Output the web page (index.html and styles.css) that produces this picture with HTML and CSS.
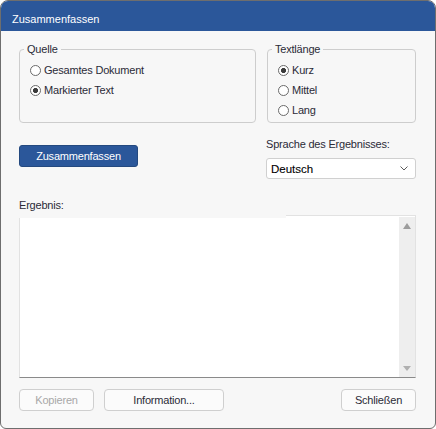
FILE: index.html
```html
<!DOCTYPE html>
<html lang="de">
<head>
<meta charset="utf-8">
<title>Zusammenfassen</title>
<link rel="stylesheet" href="styles.css">
</head>
<body>
<div class="window">
  <div class="titlebar">Zusammenfassen</div>
  <div class="content">
    <div class="groups">
      <fieldset class="group">
        <legend>Quelle</legend>
        <div class="options">
          <div class="option"><span class="radio"></span>Gesamtes Dokument</div>
          <div class="option"><span class="radio checked"></span>Markierter Text</div>
        </div>
      </fieldset>
      <fieldset class="group">
        <legend>Textlänge</legend>
        <div class="options">
          <div class="option"><span class="radio checked"></span>Kurz</div>
          <div class="option"><span class="radio"></span>Mittel</div>
          <div class="option"><span class="radio"></span>Lang</div>
        </div>
      </fieldset>
    </div>
    <div class="action">
      <div><button class="primary">Zusammenfassen</button></div>
      <div class="lang">
        <div class="label">Sprache des Ergebnisses:</div>
        <div class="select">
          <span class="select-value">Deutsch</span>
          <svg class="chevron" width="8" height="5" viewBox="0 0 8 5"><polyline points="0.5,0.5 4,4 7.5,0.5" fill="none" stroke="#5c5c5c" stroke-width="1"/></svg>
        </div>
      </div>
    </div>
    <div class="label result-label">Ergebnis:</div>
    <div class="result">
      <div class="result-text"></div>
      <div class="scrollbar"><span class="arrow up"></span><span class="arrow down"></span></div>
    </div>
    <div class="footer">
      <button class="btn disabled">Kopieren</button>
      <button class="btn wide">Information...</button>
      <button class="btn close">Schließen</button>
    </div>
  </div>
</div>
</body>
</html>
```

FILE: styles.css
```css
html, body {
  margin: 0;
  background: #ffffff;
}
body {
  font-family: "Liberation Sans", Arial, sans-serif;
  font-size: 11px;
  line-height: 14px;
  color: #2b2b38;
  letter-spacing: -0.2px;
}
.window {
  width: 436px;
  height: 429px;
  box-sizing: border-box;
  border: 1px solid #6e6e6e;
  border-radius: 8px 8px 6px 6px;
  background: #f7f7f7;
  overflow: hidden;
  display: flex;
  flex-direction: column;
}
.titlebar {
  flex: none;
  height: 30px;
  box-sizing: border-box;
  padding: 11px 0 0 11px;
  background: #2b579a;
  color: #ffffff;
  letter-spacing: 0;
}
.content {
  flex: 1;
  display: flex;
  flex-direction: column;
  padding: 11px 19px 17px 18px;
}
.groups {
  display: grid;
  grid-template-columns: 237px 149px;
  column-gap: 11px;
}
.group {
  margin: 0;
  padding: 0 0 2px;
  min-width: 0;
  border: 1px solid #cdcdcd;
  border-radius: 4px;
}
.group legend {
  margin-left: 4px;
  padding: 0 3px;
  line-height: 14px;
}
.options {
  padding-top: 4px;
}
.option {
  display: flex;
  align-items: center;
  height: 20px;
  padding-left: 10px;
}
.radio {
  flex: none;
  width: 11px;
  height: 11px;
  box-sizing: border-box;
  margin-right: 3px;
  border: 1px solid #6a6a6a;
  border-radius: 50%;
  background: #ffffff;
}
.radio.checked {
  background: radial-gradient(circle at center, #3a3a3a 0 2.2px, #ffffff 2.9px);
}
.action {
  display: grid;
  grid-template-columns: 237px 150px;
  column-gap: 10px;
  margin-top: 14px;
}
.primary {
  margin-top: 8px;
  width: 119px;
  height: 22px;
  padding: 0;
  border: 1px solid #24497f;
  border-radius: 3px;
  background: #2b579a;
  color: #ffffff;
  font: inherit;
  letter-spacing: inherit;
}
.select {
  margin-top: 7px;
  height: 21px;
  box-sizing: border-box;
  display: flex;
  align-items: center;
  justify-content: space-between;
  padding: 0 7px 0 4px;
  border: 1px solid #d0d0d0;
  border-radius: 3px;
  background: #ffffff;
}
.select-value {
  font-size: 11.5px;
  color: #000000;
  letter-spacing: 0;
  -webkit-text-stroke: 0.1px #000000;
}
.chevron {
  display: block;
}
.result-label {
  margin-top: 19px;
}
.result {
  position: relative;
  margin-top: 3px;
  height: 163px;
  box-sizing: border-box;
  display: flex;
  border: 1px solid #e2e2e2;
  border-bottom-color: #8a8a8a;
  background: #ffffff;
}
.result::before {
  content: "";
  position: absolute;
  left: -1px;
  top: -1px;
  width: 267px;
  height: 3px;
  background: #f7f7f7;
}
.result-text {
  flex: 1;
}
.scrollbar {
  width: 16px;
  margin-top: 1px;
  box-sizing: border-box;
  padding: 6px 0 6px;
  display: flex;
  flex-direction: column;
  justify-content: space-between;
  align-items: center;
  background: #eeeeee;
}
.arrow {
  width: 0;
  height: 0;
  border-left: 4.5px solid transparent;
  border-right: 4.5px solid transparent;
}
.arrow.up {
  border-bottom: 6px solid #9c9c9c;
}
.arrow.down {
  border-top: 5px solid #b0b0b0;
}
.footer {
  display: flex;
  gap: 10px;
  margin-top: 11px;
}
.btn {
  width: 75px;
  height: 22px;
  padding: 0;
  border: 1px solid #cfcfcf;
  border-radius: 4px;
  background: #fbfbfb;
  color: inherit;
  font: inherit;
  letter-spacing: inherit;
}
.btn.wide {
  width: 120px;
}
.btn.close {
  margin-left: auto;
}
.btn.disabled {
  color: #a8a8a8;
}
```
